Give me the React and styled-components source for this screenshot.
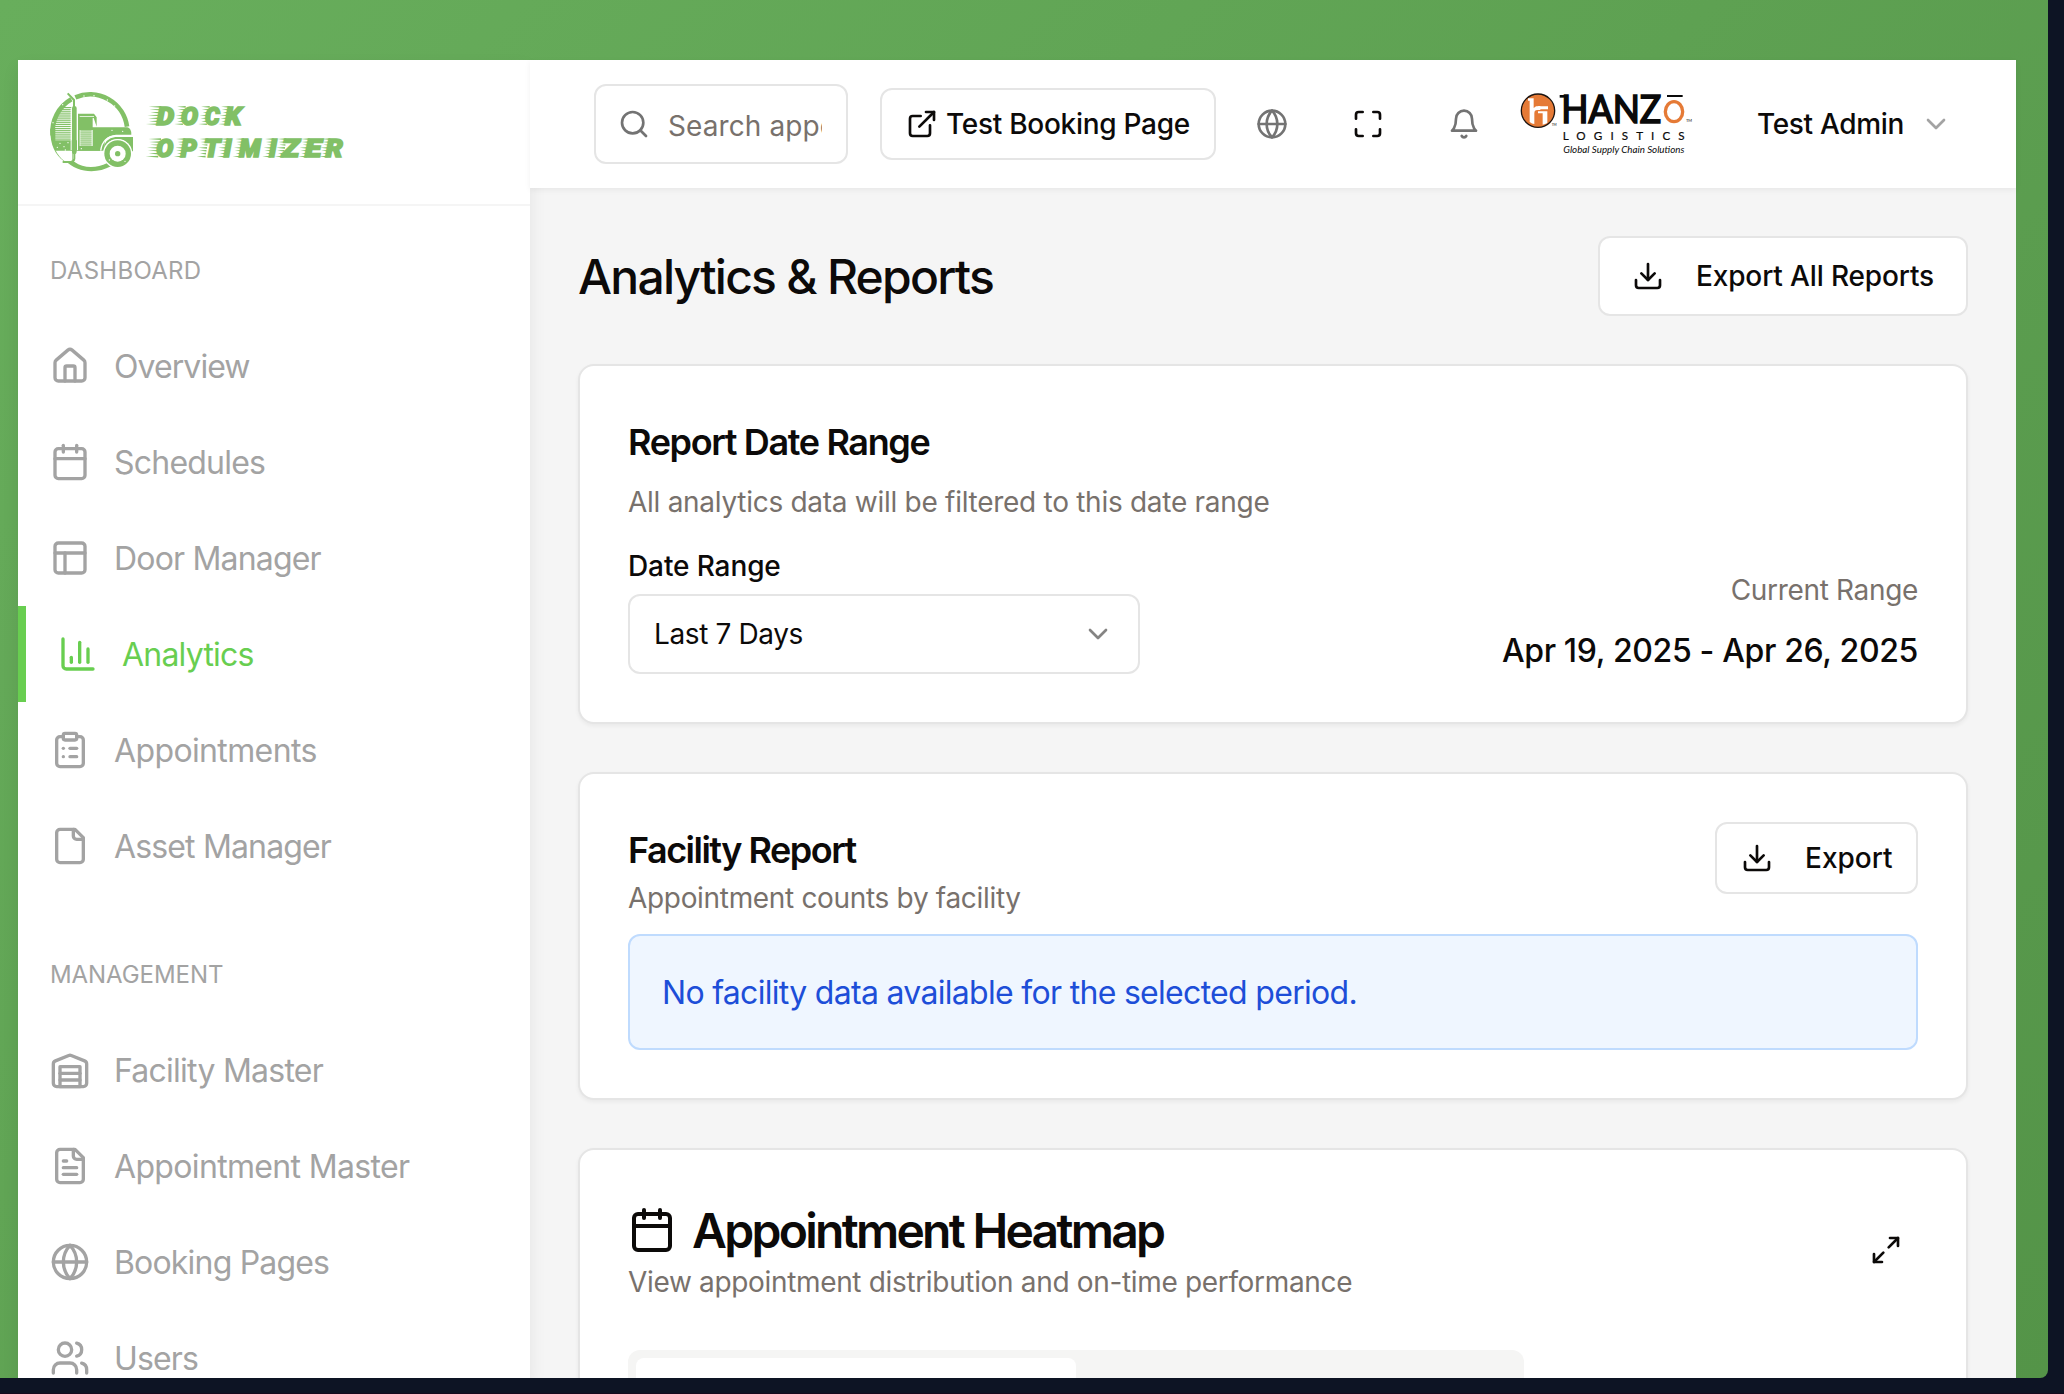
import React from "react";
import styled, { createGlobalStyle, css } from "styled-components";

const GlobalStyle = createGlobalStyle`
  *, *::before, *::after { box-sizing: border-box; }
  html, body { margin: 0; padding: 0; overflow: hidden; background: #0d1424; }
  body, button, input {
    font-family: Inter, "Liberation Sans", sans-serif;
    color: #0c0a09;
  }
  h1, h2, p { margin: 0; }
  svg { display: block; flex: none; }
`;

const tracking = css`
  letter-spacing: ${(p) => p.$track || 0}em;
`;

/* ---------- shell ---------- */

const Desktop = styled.div`
  height: 1394px;
  padding: 0 16px 16px 0;
  background: #0d1424;
  border-bottom: 1px solid #150a1e;
`;

const Backdrop = styled.div`
  display: flex;
  height: 1378px;
  padding: 60px 32px 0 18px;
  overflow: hidden;
  border-bottom-right-radius: 8px;
  background: linear-gradient(135deg, #68ae5c 0%, #549448 100%);
`;

const Window = styled.div`
  display: flex;
  flex: 1;
  min-width: 0;
  background: #f5f5f5;
`;

/* ---------- sidebar ---------- */

const Sidebar = styled.aside`
  width: 512px;
  flex: none;
  overflow: hidden;
  background: #fff;
  position: relative;
  box-shadow: 0 8px 16px rgba(0, 0, 0, 0.08);
`;

const Brand = styled.div`
  height: 146px;
  padding: 26px 0 0 26px;
  border-bottom: 2px solid #f5f5f5;
`;

const NavSection = styled.section`
  padding-top: ${(p) => p.$top}px;
`;

const SectionLabel = styled.div`
  height: 32px;
  margin-bottom: 31px;
  padding-left: 32px;
  font-size: 24px;
  line-height: 32px;
  color: #a3a3a3;
  ${tracking}
`;

const NavItem = styled.div`
  display: flex;
  align-items: center;
  gap: 24px;
  height: 96px;
  padding-left: 32px;
  font-size: 32px;
  white-space: nowrap;
  color: ${(p) => (p.$active ? "#68ce50" : "#a3a3a3")};
  border-left: ${(p) => (p.$active ? "8px solid #68ce50" : "0")};
  ${tracking}
`;

const NavText = styled.span`
  padding-top: 1px;
`;

/* ---------- header ---------- */

const Content = styled.div`
  display: flex;
  flex-direction: column;
  flex: 1;
  min-width: 0;
`;

const Header = styled.header`
  display: flex;
  align-items: center;
  flex: none;
  height: 128px;
  padding-left: 64px;
  background: #fff;
  position: relative;
  box-shadow: 0 2px 6px rgba(0, 0, 0, 0.06);
`;

const SearchBox = styled.label`
  display: flex;
  align-items: center;
  gap: 18px;
  width: 254px;
  height: 80px;
  margin-right: 32px;
  padding: 0 24px 0 22px;
  border: 2px solid #e5e5e5;
  border-radius: 12px;
  color: #737373;
`;

const SearchInput = styled.input`
  flex: 1;
  min-width: 0;
  height: 44px;
  padding: 3px 0 0;
  border: 0;
  outline: 0;
  background: none;
  font-size: 28px;
  ${tracking}
  &::placeholder { color: #78716c; opacity: 1; }
`;

const Button = styled.button`
  display: flex;
  align-items: center;
  flex: none;
  gap: ${(p) => p.$gap}px;
  width: ${(p) => p.$width}px;
  height: ${(p) => p.$height}px;
  padding: 0 ${(p) => p.$pad}px;
  border: 2px solid #e5e5e5;
  border-radius: 12px;
  background: #fff;
  font-size: 28px;
  font-weight: 500;
  white-space: nowrap;
  ${tracking}
`;

const IconSlot = styled.button`
  display: flex;
  align-items: center;
  justify-content: center;
  flex: none;
  width: ${(p) => p.$size}px;
  height: ${(p) => p.$size}px;
  padding: 0;
  border: 0;
  background: none;
  color: ${(p) => p.$color || "#0c0a09"};
`;

const HeaderTools = styled.div`
  display: flex;
  gap: 16px;
  margin: 0 16px;
`;

const UserMenu = styled.div`
  display: flex;
  align-items: center;
  gap: 16px;
  margin-left: 62px;
  font-size: 28px;
  font-weight: 500;
  white-space: nowrap;
  ${tracking}
`;

/* ---------- main ---------- */

const Main = styled.main`
  display: flex;
  flex-direction: column;
  gap: 48px;
  padding: 48px;
`;

const PageHead = styled.div`
  display: flex;
  align-items: center;
  justify-content: space-between;
  height: 80px;
`;

const PageTitle = styled.h1`
  padding-top: 2px;
  font-size: 48px;
  font-weight: 500;
  line-height: 64px;
  ${tracking}
`;

const Card = styled.section`
  flex: none;
  padding: 48px;
  border: 2px solid #e5e5e5;
  border-radius: 16px;
  background: #fff;
  box-shadow: 0 2px 4px rgba(0, 0, 0, 0.05);
`;

const CardTitle = styled.h2`
  font-size: 36px;
  font-weight: 600;
  line-height: 56px;
  ${tracking}
`;

const HeroTitle = styled.h2`
  display: flex;
  align-items: center;
  gap: 16px;
  height: 64px;
  font-size: 48px;
  font-weight: 600;
  line-height: 60px;
  ${tracking}
`;

const HeroText = styled.span`
  padding-top: 2px;
`;

const Muted = styled.p`
  margin-top: ${(p) => p.$top || 0}px;
  font-size: 28px;
  line-height: 40px;
  color: #78716c;
  ${tracking}
`;

const CardHead = styled.div`
  display: flex;
  align-items: ${(p) => p.$align || "flex-start"};
  justify-content: space-between;
`;

const RangeRow = styled.div`
  display: flex;
  align-items: flex-end;
  justify-content: space-between;
  margin-top: 24px;
`;

const FieldLabel = styled.div`
  margin-bottom: 8px;
  font-size: 28px;
  font-weight: 500;
  line-height: 40px;
  ${tracking}
`;

const Select = styled.div`
  display: flex;
  align-items: center;
  justify-content: space-between;
  width: 512px;
  height: 80px;
  padding: 0 24px;
  border: 2px solid #e5e5e5;
  border-radius: 12px;
  font-size: 28px;
  ${tracking}
`;

const SelectChevron = styled.span`
  color: #858483;
`;

const CurrentRange = styled.div`
  text-align: right;
`;

const RangeValue = styled.p`
  padding-top: 17px;
  font-size: 32px;
  font-weight: 500;
  line-height: 47px;
  ${tracking}
`;

const Notice = styled.div`
  margin-top: 16px;
  padding: 33px 32px 31px;
  border: 2px solid #bfdbfe;
  border-radius: 12px;
  background: #eff6ff;
  color: #1d4ed8;
  font-size: 32px;
  line-height: 48px;
  ${tracking}
`;

const TabList = styled.div`
  display: flex;
  width: 896px;
  height: 80px;
  margin-top: 48px;
  padding: 8px;
  border-radius: 12px;
  background: #f5f5f4;
`;

const ActiveTab = styled.div`
  width: 440px;
  border-radius: 8px;
  background: #fff;
`;

/* ---------- icons (24-unit grid, round strokes) ---------- */

const ICONS = {
  home: ["M15 21v-8a1 1 0 0 0-1-1h-4a1 1 0 0 0-1 1v8", "M3 10a2 2 0 0 1 .709-1.528l7-5.999a2 2 0 0 1 2.582 0l7 5.999A2 2 0 0 1 21 10v9a2 2 0 0 1-2 2H5a2 2 0 0 1-2-2z"],
  calendar: ["M8 2v4", "M16 2v4", "M5 4h14a2 2 0 0 1 2 2v14a2 2 0 0 1-2 2H5a2 2 0 0 1-2-2V6a2 2 0 0 1 2-2z", "M3 10h18"],
  panels: ["M5 3h14a2 2 0 0 1 2 2v14a2 2 0 0 1-2 2H5a2 2 0 0 1-2-2V5a2 2 0 0 1 2-2z", "M3 9h18", "M9 21V9"],
  chart: ["M3 3v16a2 2 0 0 0 2 2h16", "M18 17V9", "M13 17V5", "M8 17v-3"],
  clipboard: ["M9 2h6a1 1 0 0 1 1 1v2a1 1 0 0 1-1 1H9a1 1 0 0 1-1-1V3a1 1 0 0 1 1-1z", "M16 4h2a2 2 0 0 1 2 2v14a2 2 0 0 1-2 2H6a2 2 0 0 1-2-2V6a2 2 0 0 1 2-2h2", "M12 11h4", "M12 16h4", "M8 11h.01", "M8 16h.01"],
  file: ["M15 2H6a2 2 0 0 0-2 2v16a2 2 0 0 0 2 2h12a2 2 0 0 0 2-2V7Z", "M14 2v4a2 2 0 0 0 2 2h4"],
  fileText: ["M15 2H6a2 2 0 0 0-2 2v16a2 2 0 0 0 2 2h12a2 2 0 0 0 2-2V7Z", "M14 2v4a2 2 0 0 0 2 2h4", "M10 9H8", "M16 13H8", "M16 17H8"],
  warehouse: ["M22 8.35V20a2 2 0 0 1-2 2H4a2 2 0 0 1-2-2V8.35A2 2 0 0 1 3.26 6.5l8-3.2a2 2 0 0 1 1.48 0l8 3.2A2 2 0 0 1 22 8.35Z", "M6 18h12", "M6 14h12", "M6 10h12v12H6z"],
  globe: ["M12 2a10 10 0 1 0 0 20a10 10 0 1 0 0-20", "M12 2a14.5 14.5 0 0 0 0 20 14.5 14.5 0 0 0 0-20", "M2 12h20"],
  users: ["M16 21v-2a4 4 0 0 0-4-4H6a4 4 0 0 0-4 4v2", "M9 3a4 4 0 1 0 0 8a4 4 0 1 0 0-8", "M22 21v-2a4 4 0 0 0-3-3.87", "M16 3.13a4 4 0 0 1 0 7.75"],
  search: ["M11 3a8 8 0 1 0 0 16a8 8 0 1 0 0-16", "m21 21-4.3-4.3"],
  external: ["M15 3h6v6", "M10 14 21 3", "M18 13v6a2 2 0 0 1-2 2H5a2 2 0 0 1-2-2V8a2 2 0 0 1 2-2h6"],
  maximize: ["M8 3H5a2 2 0 0 0-2 2v3", "M21 8V5a2 2 0 0 0-2-2h-3", "M3 16v3a2 2 0 0 0 2 2h3", "M16 21h3a2 2 0 0 0 2-2v-3"],
  bell: ["M6 8a6 6 0 0 1 12 0c0 7 3 9 3 9H3s3-2 3-9", "M10.3 21a1.94 1.94 0 0 0 3.4 0"],
  chevron: ["m6 9 6 6 6-6"],
  download: ["M21 15v4a2 2 0 0 1-2 2H5a2 2 0 0 1-2-2v-4", "m7 10 5 5 5-5", "M12 15V3"],
  expand: ["M15 3h6v6", "M9 21H3v-6", "M21 3l-7 7", "M3 21l7-7"],
};

const StrokeSvg = styled.svg`
  fill: none;
  stroke: currentColor;
  stroke-width: 2;
  stroke-linecap: round;
  stroke-linejoin: round;
`;

function Icon({ name, size = 32 }) {
  return (
    <StrokeSvg width={size} height={size} viewBox="0 0 24 24" aria-hidden="true">
      {ICONS[name].map((d) => (
        <path key={d} d={d} />
      ))}
    </StrokeSvg>
  );
}

/* ---------- logos ---------- */

const BrandSvg = styled.svg`
  fill: #82c066;
`;

const BrandLetter = styled.text`
  font-family: Roboto, "Liberation Sans", sans-serif;
  font-weight: 900;
  font-style: italic;
  font-size: 76px;
  stroke: #82c066;
  stroke-width: 5;
`;

const DOCK = [["D", 338, 52], ["O", 411, 51], ["C", 483, 44], ["K", 543, 49]];
const OPTIMIZER = [
  ["O", 337, 51], ["P", 410, 48], ["T", 479, 49], ["I", 539, 23], ["M", 586, 64],
  ["I", 675, 23], ["Z", 713, 53], ["E", 783, 49], ["R", 845, 51],
];

function LetterRow({ letters, baseline }) {
  return letters.map(([ch, x, w], i) => (
    <g key={i}>
      {[0, 1, 2, 3, 4, 5, 6].map((n) => {
        const y = baseline - 55 + n * 8.7;
        const len = (i === 0 ? 38 : 26) - (n % 3) * 4;
        const end = x + 14 - n * 1.4;
        return <path key={n} d={`M${end - len} ${y}L${end} ${y - 2}V${y + 3}Z`} />;
      })}
      <BrandLetter x={x} y={baseline - 1} textLength={w} lengthAdjust="spacingAndGlyphs">{ch}</BrandLetter>
    </g>
  ));
}

function DockOptimizerLogo() {
  const slats = Array.from({ length: 16 }, (_, i) => 63 + i * 6.3);
  return (
    <BrandSvg width="310" height="96" viewBox="0 0 930 288">
      <path fill="none" stroke="#82c066" strokeWidth="14" d="M94 34A112 112 0 0 1 249 122" />
      <path fill="none" stroke="#82c066" strokeWidth="14" d="M82 40A112 112 0 0 0 26 148" />
      <path d="M19 128C18 178 34 206 60 226H86V192H34V128Z" />
      <path d="M62 222C100 262 158 264 201 241L190 231C156 248 118 247 92 228Z" />
      {slats.map((y) => (
        <rect key={y} x={y < 85 ? 50 - (y - 63) * 0.6 : 33} y={y} width={y < 85 ? 32 + (y - 63) * 0.6 : 49} height="3.6" />
      ))}
      <path fill="#fff" d="M34 192H84V226H62C50 217 41 206 34 192Z" />
      <path d="M33 163H182V194H33Z" />
      <path fill="none" stroke="#82c066" strokeWidth="6" d="M71 22L90 42V66M91 200V218Q90 228 80 228H56" />
      <path d="M84 66Q84 60 91 60Q98 60 98 66V196Q98 205 91 205Q84 205 84 196Z" />
      <path fill="#fff" d="M80 66h3v126h-3zM99 84h3v108h-3z" />
      <path d="M102 83H150L158 94V122L149 96H146V124H250Q262 126 262 146H216Q178 148 172 194H102Z" />
      <path fill="#fff" d="M107 91H150V93H107ZM107 132H146V180H107Z" />
      {[0, 1, 2, 3, 4, 5, 6, 7].map((n) => (
        <rect key={n} x="109" y={133 + n * 6} width="34" height="3.6" />
      ))}
      <path fill="none" stroke="#fff" strokeWidth="4" d="M264 149H218Q176 151 170 194" />
      <path d="M178 190Q182 157 214 153H267V196H262Q254 160 221 160Q190 160 181 190Z" />
      <circle cx="221" cy="203" r="44" fill="#fff" />
      <circle cx="221" cy="203" r="40" />
      <circle cx="221" cy="203" r="24" fill="#fff" />
      <circle cx="221" cy="203" r="8" />
      {[[48, 172], [60, 182], [72, 170], [40, 184], [120, 30], [150, 29], [190, 42], [212, 60], [204, 133], [236, 136], [196, 222], [243, 226], [56, 56], [27, 110], [64, 192], [112, 188]].map(([x, y]) => (
        <circle key={`${x}-${y}`} cx={x} cy={y} r="2" fill="#fff" />
      ))}
      <LetterRow letters={DOCK} baseline={117} />
      <LetterRow letters={OPTIMIZER} baseline={214} />
    </BrandSvg>
  );
}

const HanzoSvg = styled.svg`
  font-family: Lato, "Open Sans", sans-serif;
  fill: #0a0a0a;
`;

function HanzoLogo() {
  return (
    <HanzoSvg width="175" height="80" viewBox="360 0 525 240">
      <circle cx="414" cy="80" r="50" fill="#e57a36" stroke="#1c1410" strokeWidth="4" />
      <path fill="#fff" d="M384 43H401V72Q406 66 416 66H421V78H412Q403 78 403 88V120Q396 120 389 114V50H384ZM407 67H444V76H407ZM414 82H442V117Q435 121 428 122V88H414Z" />
      <text x="455" y="125" fontSize="10">TM</text>
      <path d="M479 33H496V41H479Z" />
      <text x="484" y="116" fontSize="114" stroke="#0a0a0a" strokeWidth="5" textLength="300" lengthAdjust="spacingAndGlyphs">HANZ</text>
      <ellipse cx="822" cy="83" rx="26" ry="30" fill="none" stroke="#e57a36" strokeWidth="10" />
      <path d="M801 33H848V39H801Z" />
      <text x="858" y="114" fontSize="12">TM</text>
      <text x="488" y="167" fontSize="35" stroke="#0a0a0a" strokeWidth=".6" textLength="366">LOGISTICS</text>
      <text x="490" y="206" fontSize="27" fontStyle="italic" textLength="363" lengthAdjust="spacingAndGlyphs">Global Supply Chain Solutions</text>
    </HanzoSvg>
  );
}

/* ---------- data ---------- */

const DASHBOARD = [
  { icon: "home", label: "Overview", track: -0.029 },
  { icon: "calendar", label: "Schedules", track: -0.0245 },
  { icon: "panels", label: "Door Manager", track: -0.0255 },
  { icon: "chart", label: "Analytics", track: -0.0245, active: true },
  { icon: "clipboard", label: "Appointments", track: -0.0195 },
  { icon: "file", label: "Asset Manager", track: -0.0265 },
];

const MANAGEMENT = [
  { icon: "warehouse", label: "Facility Master", track: -0.0235 },
  { icon: "fileText", label: "Appointment Master", track: -0.0205 },
  { icon: "globe", label: "Booking Pages", track: -0.0255 },
  { icon: "users", label: "Users", track: -0.026 },
];

function NavList({ items }) {
  return items.map((item) => (
    <NavItem key={item.label} $active={item.active} $track={item.track}>
      <Icon name={item.icon} size={40} />
      <NavText>{item.label}</NavText>
    </NavItem>
  ));
}

export default function App() {
  return (
    <Desktop>
      <GlobalStyle />
      <Backdrop>
        <Window>
          <Sidebar>
            <Brand>
              <DockOptimizerLogo />
            </Brand>
            <NavSection $top={49}>
              <SectionLabel $track={0.012}>DASHBOARD</SectionLabel>
              <NavList items={DASHBOARD} />
            </NavSection>
            <NavSection $top={65}>
              <SectionLabel $track={-0.003}>MANAGEMENT</SectionLabel>
              <NavList items={MANAGEMENT} />
            </NavSection>
          </Sidebar>

          <Content>
            <Header>
              <SearchBox>
                <Icon name="search" />
                <SearchInput placeholder="Search appointments" $track={0.003} />
              </SearchBox>
              <Button $gap={8} $width={336} $height={72} $pad={24} $track={-0.01}>
                <Icon name="external" />
                Test Booking Page
              </Button>
              <HeaderTools>
                <IconSlot $size={80} $color="#737373"><Icon name="globe" /></IconSlot>
                <IconSlot $size={80}><Icon name="maximize" /></IconSlot>
                <IconSlot $size={80} $color="#737373"><Icon name="bell" /></IconSlot>
              </HeaderTools>
              <HanzoLogo />
              <UserMenu $track={-0.012}>
                Test Admin
                <IconSlot as="span" $size={32} $color="#a3a3a3"><Icon name="chevron" /></IconSlot>
              </UserMenu>
            </Header>

            <Main>
              <PageHead>
                <PageTitle $track={-0.0364}>Analytics &amp; Reports</PageTitle>
                <Button $gap={32} $width={370} $height={80} $pad={32} $track={-0.005}>
                  <Icon name="download" />
                  Export All Reports
                </Button>
              </PageHead>

              <Card>
                <CardTitle $track={-0.038}>Report Date Range</CardTitle>
                <Muted $top={12} $track={-0.01}>All analytics data will be filtered to this date range</Muted>
                <RangeRow>
                  <div>
                    <FieldLabel $track={-0.004}>Date Range</FieldLabel>
                    <Select $track={-0.0135}>
                      Last 7 Days
                      <SelectChevron><Icon name="chevron" /></SelectChevron>
                    </Select>
                  </div>
                  <CurrentRange>
                    <Muted $track={-0.012}>Current Range</Muted>
                    <RangeValue $track={-0.011}>Apr 19, 2025 - Apr 26, 2025</RangeValue>
                  </CurrentRange>
                </RangeRow>
              </Card>

              <Card>
                <CardHead>
                  <div>
                    <CardTitle $track={-0.042}>Facility Report</CardTitle>
                    <Muted $track={-0.0115}>Appointment counts by facility</Muted>
                  </div>
                  <Button $gap={32} $width={203} $height={72} $pad={24}>
                    <Icon name="download" />
                    Export
                  </Button>
                </CardHead>
                <Notice $track={-0.0218}>No facility data available for the selected period.</Notice>
              </Card>

              <Card>
                <CardHead $align="center">
                  <div>
                    <HeroTitle $track={-0.0565}>
                      <Icon name="calendar" size={48} />
                      <HeroText>Appointment Heatmap</HeroText>
                    </HeroTitle>
                    <Muted $track={-0.012}>View appointment distribution and on-time performance</Muted>
                  </div>
                  <IconSlot $size={64}><Icon name="expand" /></IconSlot>
                </CardHead>
                <TabList>
                  <ActiveTab />
                </TabList>
              </Card>
            </Main>
          </Content>
        </Window>
      </Backdrop>
    </Desktop>
  );
}
